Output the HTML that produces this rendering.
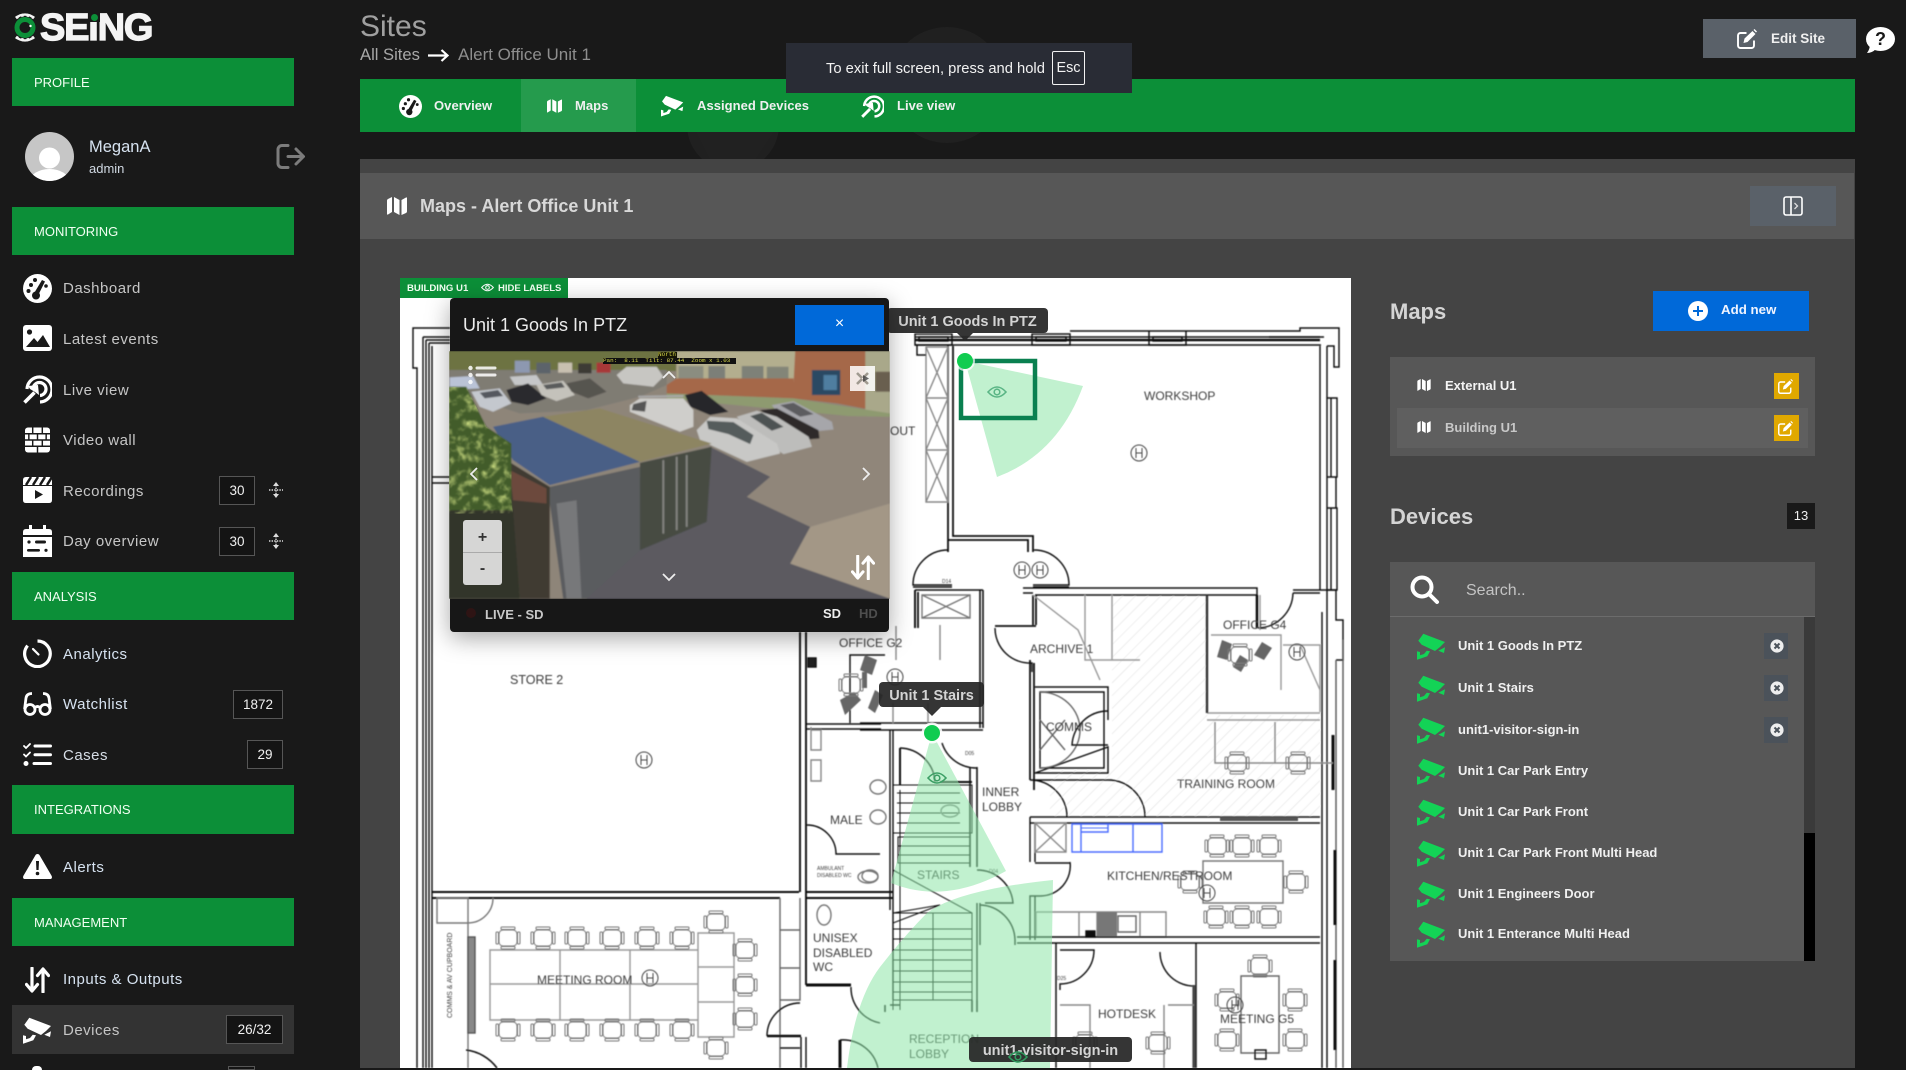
<!DOCTYPE html>
<html lang="en"><head><meta charset="utf-8"><title>Sites - Maps</title>
<style>
*{box-sizing:border-box}
html,body{margin:0;padding:0;width:1906px;height:1068px;overflow:hidden;background:#191919;font-family:"Liberation Sans",sans-serif;color:#fff}
.a,.h,.m,.b,.d,.x,.tip{position:absolute}
svg.a{overflow:visible}
.h{left:12px;width:282px;height:48px;background:#0c8f38;padding-left:22px;font-size:13px;line-height:50px;color:#f2fff2}
.m{left:63px;font-size:15px;line-height:22px;color:#c6c6c6;letter-spacing:.5px;white-space:nowrap}
.b{height:29px;border:1px solid #565656;background:#141414;text-align:center;font-size:13.5px;line-height:27px;color:#f0f0f0}
.d{left:1458px;font-size:13px;font-weight:700;line-height:20px;color:#f0f0f0;white-space:nowrap}
.x{left:1764px;width:24px;height:26px;background:#4b525a}
.tip{background:rgba(38,38,38,.93);border-radius:4px;color:#d4d4d4;font-size:14.5px;font-weight:700;text-align:center;white-space:nowrap;height:25px;line-height:28px}
.tab{position:absolute;top:79px;font-size:13px;font-weight:700;line-height:53px;color:#f0f0f0;white-space:nowrap;letter-spacing:.05px}
</style></head><body>

<svg width="0" height="0" style="position:absolute"><defs>
<symbol id="dash" viewBox="0 0 29 29"><circle cx="14.5" cy="14.5" r="14.5" fill="currentColor"/><g fill="#191919"><circle cx="8" cy="11" r="2"/><circle cx="12" cy="6" r="2"/><circle cx="5.5" cy="17" r="2"/><circle cx="23" cy="12" r="1.8"/><circle cx="13" cy="21.5" r="4"/><path d="M19 6l3 1.5-6.5 13-4-2z"/></g></symbol>
<symbol id="img" viewBox="0 0 29 26"><rect width="29" height="26" rx="3" fill="currentColor"/><g fill="#191919"><circle cx="6.5" cy="7" r="2.6"/><path d="M3 22l8-9 3.5 4 5.5-7 7 12z"/></g></symbol>
<symbol id="live" viewBox="0 0 29 29"><g fill="none" stroke="currentColor" stroke-width="3.2"><path d="M4 14A12.5 12.5 0 1 1 17 27"/><path d="M10 14A6.5 6.5 0 1 1 17 20.5"/><path d="M1.5 27.5l10-10" stroke-width="3.6"/></g><path d="M5 11l10-1 1 10-4-3-5-3z" fill="currentColor"/></symbol>
<symbol id="wall" viewBox="0 0 26 26"><rect width="26" height="26" rx="3" fill="currentColor"/><path d="M0 6.5H26M0 13H26M0 19.5H26M8 0V6.5M18 0V6.5M13 6.5V13M4 6.5V13M22 6.5V13M8 13V19.5M18 13V19.5M13 19.5V26" stroke="#191919" stroke-width="1.5"/></symbol>
<symbol id="clap" viewBox="0 0 29 26"><path d="M0 8V3q0-3 3-3h23q3 0 3 3v5z" fill="currentColor"/><path d="M8 0L3 8M15 0L10 8M22 0L17 8M29 0L24 8" stroke="#191919" stroke-width="2.5"/><path d="M0 9H29V23q0 3-3 3H3q-3 0-3-3z" fill="currentColor"/><path d="M12 13l8 4.5-8 4.5z" fill="#191919"/></symbol>
<symbol id="cal" viewBox="0 0 29 32"><path d="M6 0h3v4h11V0h3v4h3q3 0 3 3v3H0V7q0-3 3-3h3zM0 12H29V32H0z" fill="currentColor"/><g fill="#191919"><circle cx="6" cy="17" r="1.6"/><rect x="12" y="15.5" width="11" height="3" rx="1.5"/><rect x="4" y="24" width="13" height="2.6" rx="1.3"/><circle cx="23" cy="25.3" r="1.6"/></g></symbol>
<symbol id="watch" viewBox="0 0 29 29"><path d="M14.5 2A12.8 12.8 0 1 1 4.6 6.6" fill="none" stroke="currentColor" stroke-width="3.2"/><path d="M10 10l5.5 5.5" stroke="currentColor" stroke-width="2.2" stroke-linecap="round"/></symbol>
<symbol id="glass" viewBox="0 0 29 24"><g fill="none" stroke="currentColor" stroke-width="2.8"><circle cx="7" cy="17.5" r="5"/><circle cx="22" cy="17.5" r="5"/><path d="M1.6 17L3 6Q3.6 1.6 9 1.5M27.4 17L26 6Q25.4 1.6 20 1.5M12 15.5Q14.5 13.5 17 15.5"/></g></symbol>
<symbol id="cases" viewBox="0 0 29 23"><g fill="none" stroke="currentColor" stroke-linecap="round"><path d="M1 3l2 2 4-4M1 11.5l2 2 4-4" stroke-width="1.8"/><path d="M12 3H27.5M12 11.8H27.5M11 20.5H27.5" stroke-width="3"/></g><circle cx="3" cy="20.5" r="2.5" fill="currentColor"/></symbol>
<symbol id="alert" viewBox="0 0 29 25"><path d="M14.5 0q1.5 0 2.3 1.6L28.7 22q1 3-2 3H2.3q-3 0-2-3L12.2 1.6Q13 0 14.5 0z" fill="currentColor"/><path d="M13 7h3l-.4 9h-2.2z" fill="#191919"/><circle cx="14.5" cy="19.5" r="1.8" fill="#191919"/></symbol>
<symbol id="io" viewBox="0 0 25 26"><path d="M7 1V23M1.5 17.5L7 24l5.5-6.5M18 25V3M12.5 8.5L18 2l5.5 6.5" fill="none" stroke="currentColor" stroke-width="3.2" stroke-linecap="round" stroke-linejoin="round"/></symbol>
<symbol id="cam" viewBox="0 0 29 27"><path d="M6.3 .8L28 9 23 14 18 18 4.7 11.7 1.3 7.7zM28 14.3L27 20 21.3 17.7zM0 18.3L3 19V22.3L7 21 9.7 17.7 13 18.3 10.3 23.3 3 25.7 0 26.7z" fill="currentColor"/></symbol>
<symbol id="map" viewBox="0 0 20 18"><path d="M0 3.5Q0 2.5 1 2L5 0V15L1 17.5Q0 18 0 17zM7 0L12.5 3V18L7 15zM14.5 3L19 .5Q20 0 20 1V14.5Q20 15.5 19 16L14.5 18z" fill="currentColor"/></symbol>
<symbol id="edit" viewBox="0 0 20 20"><path d="M17 11.5V16.5A2.5 2.5 0 0 1 14.5 19H3.5A2.5 2.5 0 0 1 1 16.5V6.5A2.5 2.5 0 0 1 3.5 4H9.5" fill="none" stroke="currentColor" stroke-width="1.9"/><path d="M6.5 14l1-4.5L15.5 2l3 3-8 8zM16.5 1l1-1 2.5 2.5-1 1z" fill="currentColor"/></symbol>
<symbol id="xc" viewBox="0 0 14 14"><circle cx="7" cy="7" r="6.6" fill="currentColor"/><path d="M4.5 4.5l5 5M9.5 4.5l-5 5" stroke="#4b525a" stroke-width="2"/></symbol>
<symbol id="move" viewBox="0 0 14 16"><path d="M7 0l3 4H4zM7 16l-3-4h6z" fill="currentColor"/><path d="M0 8H14M7 3V13" stroke="currentColor" stroke-width="1.4" stroke-dasharray="1.4 1.2"/></symbol>
<symbol id="eye" viewBox="0 0 20 14"><path d="M1 7Q10-3 19 7 10 17 1 7z" fill="none" stroke="currentColor" stroke-width="1.6"/><circle cx="10" cy="7" r="2.8" fill="none" stroke="currentColor" stroke-width="1.6"/></symbol>
<g id="ch" fill="none" stroke="#777" stroke-width="1"><rect x="-9" y="-8" width="18" height="16" rx="4"/><rect x="-12" y="-6" width="2.5" height="12" rx="1"/><rect x="9.5" y="-6" width="2.5" height="12" rx="1"/><rect x="-7" y="-11" width="14" height="2.5" rx="1"/><rect x="-7" y="8.5" width="14" height="2.5" rx="1"/></g>
<g id="hh" fill="none" stroke="#444" stroke-width="1"><circle r="8"/><path d="M-3-5V5M3-5V5M-3 0H3"/></g>
<pattern id="hatch" width="9" height="9" patternUnits="userSpaceOnUse" patternTransform="rotate(-45)"><path d="M0 0H9" stroke="#ddd" stroke-width="1"/></pattern>
<filter id="soft" x="-2%" y="-2%" width="104%" height="104%"><feGaussianBlur stdDeviation=".4"/></filter>
<filter id="vb" x="-2%" y="-2%" width="104%" height="104%"><feGaussianBlur stdDeviation="2.2"/></filter>
<filter id="leaf"><feTurbulence type="fractalNoise" baseFrequency=".04" numOctaves="3" seed="4"/><feColorMatrix values="0 0 0 0 .6 0 0 0 0 .72 0 0 0 0 .22 2.4 0 0 0 -1.15"/><feGaussianBlur stdDeviation="2"/></filter>
<clipPath id="treeclip"><path d="M148 350H200L260 470 335 520V690L340 730H148z"/></clipPath>
</defs></svg>

<!-- faint watermark -->
<svg class="a" style="left:360px;top:0" width="1495" height="160"><circle cx="373" cy="125" r="46" fill="#202020"/><circle cx="587" cy="85" r="58" fill="#202020"/><path d="M335 130h80l-20 30h-45z" fill="#212121"/></svg>

<!-- LOGO -->
<svg class="a" style="left:12px;top:11px" width="27" height="33" viewBox="0 0 27 33"><g fill="none" stroke="#f4f4f4"><path d="M4 7A13.5 13.5 0 0 1 22 7M4 26A13.5 13.5 0 0 0 22 26" stroke-width="2.4"/><path d="M4 7A15.5 15.5 0 0 1 22 7M4 26A15.5 15.5 0 0 0 22 26" stroke-width="3" stroke-dasharray="2.6 3"/></g><circle cx="13" cy="16.5" r="8" fill="#191919" stroke="#0c8f38" stroke-width="5"/><circle cx="18.5" cy="15" r="1.2" fill="#fff"/></svg>
<div class="a" style="left:40px;top:6px;font-size:38px;line-height:44px;font-weight:700;color:#f4f4f4;letter-spacing:-1.2px;-webkit-text-stroke:1.3px #f4f4f4">SEiNG</div>
<div class="a" style="left:89px;top:11px;width:11px;height:11px;background:#191919"></div>
<div class="a" style="left:91px;top:14px;width:7px;height:7px;border-radius:50%;background:#0c8f38"></div>

<!-- SIDEBAR -->
<div class="h" style="top:58px">PROFILE</div>
<svg class="a" style="left:24.5px;top:132px" width="49" height="49" viewBox="0 0 49 49"><defs><clipPath id="av"><circle cx="24.5" cy="24.5" r="24.5"/></clipPath></defs><g clip-path="url(#av)"><rect width="49" height="49" fill="#c6c6c6"/><circle cx="24.5" cy="26" r="10.5" fill="#fff"/><ellipse cx="24.5" cy="50" rx="20" ry="13" fill="#fff"/></g></svg>
<div class="a" style="left:89px;top:137px;font-size:16.5px;line-height:20px;color:#d6e2f0">MeganA</div>
<div class="a" style="left:89px;top:161px;font-size:13px;line-height:16px;color:#d0d8e2">admin</div>
<svg class="a" style="left:276px;top:144px;color:#7c7c7c" width="30" height="25" viewBox="0 0 30 25"><path d="M12 1.5H6A4 4 0 0 0 2 5.5V19.5A4 4 0 0 0 6 23.5H12M12 12.5H27M20 5l7.5 7.5L20 20" fill="none" stroke="currentColor" stroke-width="3" stroke-linecap="round" stroke-linejoin="round"/></svg>

<div class="h" style="top:207px">MONITORING</div>
<svg class="a" style="left:23px;top:274px;color:#fff" width="29" height="29"><use href="#dash"/></svg><div class="m" style="top:278px">Dashboard</div>
<svg class="a" style="left:23px;top:325px;color:#fff" width="29" height="26"><use href="#img"/></svg><div class="m" style="top:329px">Latest events</div>
<svg class="a" style="left:23px;top:375px;color:#fff" width="29" height="29"><use href="#live"/></svg><div class="m" style="top:380px">Live view</div>
<svg class="a" style="left:25px;top:427px;color:#fff" width="25" height="26"><use href="#wall"/></svg><div class="m" style="top:430px">Video wall</div>
<svg class="a" style="left:23px;top:477px;color:#fff" width="29" height="26"><use href="#clap"/></svg><div class="m" style="top:481px">Recordings</div>
<div class="b" style="left:219px;top:476px;width:36px">30</div><svg class="a" style="left:269px;top:482px;color:#ddd" width="14" height="16"><use href="#move"/></svg>
<svg class="a" style="left:23px;top:525px;color:#fff" width="29" height="32"><use href="#cal"/></svg><div class="m" style="top:531px">Day overview</div>
<div class="b" style="left:219px;top:527px;width:36px">30</div><svg class="a" style="left:269px;top:533px;color:#ddd" width="14" height="16"><use href="#move"/></svg>

<div class="h" style="top:572px">ANALYSIS</div>
<svg class="a" style="left:23px;top:639px;color:#fff" width="29" height="29"><use href="#watch"/></svg><div class="m" style="top:644px;color:#d6e2f0">Analytics</div>
<svg class="a" style="left:23px;top:692px;color:#fff" width="29" height="24"><use href="#glass"/></svg><div class="m" style="top:694px;color:#d6e2f0">Watchlist</div>
<div class="b" style="left:233px;top:690px;width:50px">1872</div>
<svg class="a" style="left:23px;top:743px;color:#fff" width="29" height="23"><use href="#cases"/></svg><div class="m" style="top:745px;color:#d6dde6">Cases</div>
<div class="b" style="left:247px;top:740px;width:36px">29</div>

<div class="h" style="top:785px;height:49px">INTEGRATIONS</div>
<svg class="a" style="left:23px;top:854px;color:#fff" width="29" height="25"><use href="#alert"/></svg><div class="m" style="top:857px;color:#d6e2f0">Alerts</div>

<div class="h" style="top:898px">MANAGEMENT</div>
<svg class="a" style="left:25px;top:967px;color:#fff" width="25" height="26"><use href="#io"/></svg><div class="m" style="top:969px;color:#d6e2f0">Inputs &amp; Outputs</div>
<div class="a" style="left:12px;top:1005px;width:282px;height:49px;background:#333"></div>
<svg class="a" style="left:23px;top:1017px;color:#fff" width="29" height="27"><use href="#cam"/></svg><div class="m" style="top:1020px">Devices</div>
<div class="b" style="left:226px;top:1015px;width:57px">26/32</div>
<div class="a" style="left:32px;top:1066px;width:10px;height:4px;border-radius:5px 5px 0 0;background:#fff"></div>
<div class="a" style="left:228px;top:1066px;width:27px;height:4px;border:1px solid #565656;background:#141414"></div>

<!-- TITLE -->
<div class="a" style="left:360px;top:9px;font-size:30px;line-height:36px;color:#a0a0a0">Sites</div>
<div class="a" style="left:360px;top:45px;font-size:16.6px;line-height:20px;color:#a8a8a8">All Sites</div>
<svg class="a" style="left:428px;top:49px;color:#fff" width="21" height="13" viewBox="0 0 21 13"><path d="M0 6.5H19M13.5 1l6 5.5-6 5.5" fill="none" stroke="currentColor" stroke-width="2.2"/></svg>
<div class="a" style="left:458px;top:45px;font-size:17px;line-height:20px;color:#8e8e8e">Alert Office Unit 1</div>

<!-- EDIT SITE -->
<div class="a" style="left:1703px;top:19px;width:153px;height:39px;background:#5a6169"></div>
<svg class="a" style="left:1737px;top:29px;color:#fff" width="20" height="20"><use href="#edit"/></svg>
<div class="a" style="left:1771px;top:30px;font-size:13.5px;line-height:18px;font-weight:700;color:#f0f0f0">Edit Site</div>
<svg class="a" style="left:1866px;top:27px" width="29" height="26" viewBox="0 0 29 26"><ellipse cx="14.5" cy="12" rx="14.5" ry="12" fill="#fff"/><path d="M1 26q5 0 9-4l-6-5q0 5-3 9z" fill="#fff"/></svg>
<div class="a" style="left:1866px;top:27px;width:29px;text-align:center;font-size:18px;line-height:24px;font-weight:700;color:#191919">?</div>

<!-- TABS -->
<div class="a" style="left:360px;top:79px;width:1495px;height:53px;background:#0c8f38"></div>
<div class="a" style="left:521px;top:79px;width:115px;height:53px;background:#259b4d"></div>
<svg class="a" style="left:399px;top:95px;color:#fff" width="23" height="23"><use href="#dash"/></svg><div class="tab" style="left:434px">Overview</div>
<svg class="a" style="left:547px;top:99px;color:#fff" width="15" height="14"><use href="#map"/></svg><div class="tab" style="left:575px">Maps</div>
<svg class="a" style="left:661px;top:95px;color:#fff" width="23" height="22"><use href="#cam"/></svg><div class="tab" style="left:697px">Assigned Devices</div>
<svg class="a" style="left:861px;top:95px;color:#fff" width="23" height="23"><use href="#live"/></svg><div class="tab" style="left:897px">Live view</div>

<!-- PANEL -->
<div class="a" style="left:360px;top:159px;width:1495px;height:909px;background:#444"></div>
<div class="a" style="left:360px;top:173px;width:1494px;height:66px;background:#575757"></div>
<svg class="a" style="left:387px;top:197px;color:#fff" width="20" height="18"><use href="#map"/></svg>
<div class="a" style="left:420px;top:195px;font-size:18px;line-height:22px;font-weight:700;color:#d8d8d8">Maps - Alert Office Unit 1</div>
<div class="a" style="left:1750px;top:186px;width:86px;height:40px;background:#5a6169"></div>
<svg class="a" style="left:1783px;top:196px;color:#fff" width="20" height="20" viewBox="0 0 20 20"><rect x="1" y="1" width="18" height="18" rx="2" fill="none" stroke="currentColor" stroke-width="1.6"/><path d="M8 1V19" stroke="currentColor" stroke-width="1.6"/><path d="M11.5 7l3 3-3 3" fill="none" stroke="#ddd" stroke-width="1.3"/></svg>

<!-- MAP -->
<div class="a" style="left:400px;top:278px;width:951px;height:790px;background:#fff"></div>
<svg class="a" style="left:400px;top:278px;overflow:hidden" width="951" height="790" viewBox="400 278 951 790">
<g filter="url(#soft)">
<rect x="1112" y="595" width="95" height="222" fill="url(#hatch)"/><rect x="1207" y="715" width="113" height="102" fill="url(#hatch)"/><rect x="1050" y="770" width="62" height="47" fill="url(#hatch)"/>
<g fill="none" stroke="#111" stroke-width="1.4">
<!-- outer left -->
<path d="M450 328H413V368H417V1068M423 337V1068M426 340V1068M429 343V1068M432 346V1068M423 337H450M426 340H450M429 343H450M432 477H450M432 483H450"/>
<!-- top wall -->
<path d="M915 337H1320M915 345H1321"/><path d="M915 340H1320" stroke-width="2.6"/>
<path d="M915 334H952V345H915zM1032 334H1070V345H1032zM1149 331H1186V345H1149zM1070 331H1149M1186 331H1300V328H1339V367H1334V346H1327"/>
<path d="M919 337H948V341H919zM1036 337H1066V341H1036zM1153 337H1182V341H1153zM1269 337H1324"/>
<!-- right wall -->
<path d="M1320 346V590M1327 346V398M1327 590V1068M1320 590H1336V620H1343V660H1336M1322 612V1068"/>
<path d="M1327 398H1337V477H1327zM1327 477H1336V508H1327zM1327 508H1337V590H1327zM1331 398V477M1331 508V590" />
<path d="M1336 660V1068M1343 640V1068" stroke="#555"/>
<path d="M1333 735V790M1335 850V925M1335 960V1050" stroke-width="3"/>
<!-- workshop lower -->
<path d="M948 345V540M953 346V536H1033V552M948 540H1028V552M948 540V552" stroke-width="1.8"/>
<path d="M948 550A35 35 0 0 0 913 585H952M1034 550A35 35 0 0 1 1069 585H1033M913 587H952M1033 587H1069"/>
<path d="M1023 588H1257V595H1035M1023 593H1033M1293 590H1320M1293 593H1320"/>
<path d="M1257 595V628" stroke-width="2.6"/><path d="M1293 593A36 36 0 0 1 1258 628"/>
<!-- left of corridor -->
<path d="M915 590H952M915 590V628M983 590V728M980 590V728M948 590H983" stroke-width="1.6"/>
<path d="M915 628V590M918 628V592" stroke-width="1.8"/>
<path d="M1033 595V625M1036 595V625M995 626H1036" stroke-width="1.8"/>
<path d="M995 628A35 35 0 0 0 1032 663V672"/>
<path d="M1034 663V790M1030 660V780" stroke-width="1.8"/>
<!-- store / lower left -->
<path d="M800 632V892M799 892H432M806 632V985M806 898H893M806 892H893M432 898H780" stroke-width="1.9"/>
<path d="M780 898V1000H800V898M780 930H800M780 968H800M780 1000V1068" stroke="#666"/>
<rect x="808" y="658" width="8" height="9" fill="#222"/>
<path d="M806 724H881M806 729H881M850 723V655H885M890 730V910M893 730V1000"/>
<path d="M807 825A29 29 0 0 1 836 854H880"/>
<path d="M437 898H468V923H437zM468 898V937M468 923A25 25 0 0 0 493 898" stroke="#777"/>
<path d="M468 937V1068" stroke="#777"/><rect x="468" y="937" width="7" height="96" fill="#888" stroke="#555"/>
<path d="M466 1050A45 45 0 0 1 497 1068" stroke-width="1.6"/>
<path d="M806 985H851" stroke-width="3"/><path d="M851 987A36 36 0 0 0 880 1023"/>
<path d="M800 1003A33 33 0 0 0 767 1036"/><path d="M767 1036H801" stroke-width="2.4"/><path d="M801 1037V1068M806 1037V1068M780 1048H800"/>
<path d="M840 1040V1068" stroke-width="3"/><path d="M840 1040A36 36 0 0 1 878 1068"/>
<!-- stairs -->
<path d="M893 785H972V833H893zM897 793H960M897 803H960M897 813H960M897 823H960M898 837H970V863H898zM898 846H970M898 855H970M893 785V1010M900 790V1010" stroke-width="1"/>
<path d="M893 913H972V1000H893zM893 929H972M893 939H972M893 950H972M893 960H972M893 971H972M893 982H972M893 992H972M933 913V1000M893 870L972 913M893 913L940 905 893 923" stroke-width="1"/>
<path d="M970 767V867M977 767V867M885 1005V1012M972 1000V1012M977 1000V1012M890 1005H900" stroke-width="1.6"/>
<path d="M860 723H983M860 730H983" stroke-width="1.6"/>
<path d="M893 703V723M928 703V723" stroke="#888"/>
<path d="M900 748V785M940 782H972" stroke-width="2"/><path d="M900 748A36 36 0 0 1 935 782"/>
<path d="M942 743A36 36 0 0 0 977 768"/>
<path d="M977 870A36 36 0 0 1 1013 903H985M977 903V1000M980 903V945" stroke-width="1.4"/>
<path d="M980 905A36 36 0 0 1 1015 940V945"/>
<!-- comms -->
<path d="M1035 687H1108V720M1108 747V773H1035zM1040 692H1104V768H1040z" stroke-width="1.4"/>
<path d="M1040 692A40 38 0 0 1 1040 768M1040 720L1065 750M1065 720L1040 750" stroke="#666"/>
<path d="M1108 711A36 36 0 0 0 1072 745H1108"/>
<path d="M1030 780H1112M1108 780A37 37 0 0 1 1145 817M1030 780A37 37 0 0 1 1067 817"/>
<path d="M1030 817H1320M1030 823H1320M1030 817V862M1035 823V862M1035 863H1070" stroke-width="1.4"/>
<path d="M1220 819H1298" stroke-width="4" stroke="#555"/>
<path d="M1035 823H1066V852H1035zM1035 823L1066 852M1066 823L1035 852" stroke="#888"/>
<path d="M1070 862A30 30 0 0 1 1040 896H1030V940M1035 896V940" stroke-width="1.4"/>
<!-- kitchen -->
<path d="M1072 824H1162V852H1072zM1081 824V852M1133 824V852M1081 832H1108V824" stroke="#4a6cff" stroke-width="1.4"/>
<path d="M1081 828H1108" stroke="#4a6cff" stroke-width="1"/>
<path d="M1203 861H1283V903H1203z" stroke="#777"/>
<path d="M1036 912H1166V937H1036zM1079 912V937M1097 912V937M1140 912V937" stroke="#888"/>
<rect x="1097" y="912" width="20" height="24" fill="#777" stroke="none"/>
<path d="M1118 916H1136V932H1118z" stroke="#666"/><rect x="1086" y="931" width="9" height="6" fill="#111"/>
<path d="M1017 937H1320M1017 943H1320M1056 943V1068M1059 943H1070M1196 943V1068" stroke-width="1.5"/>
<path d="M1060 950H1094A34 34 0 0 1 1060 984V990M1160 952A34 34 0 0 0 1196 986"/>
<path d="M1194 985V1068" stroke-width="3.2" stroke="#444"/>
<path d="M1060 1005H1090V1068M1168 1005H1194M1164 1005V1068" stroke="#888"/>
<path d="M1241 976H1279V1053H1241z" stroke="#666"/><rect x="1255" y="1050" width="11" height="9" fill="none"/>
<!-- goods rack -->
<path d="M926 347H948V502H926zM926 398H948M926 450H948M926 347L948 398M948 347L926 398M926 398L948 450M948 398L926 450M926 450L948 502M948 450L926 502" stroke="#888"/>
<path d="M917 345V355H926" />
<!-- offices -->
<path d="M1033 595L1078 630 1100 680M1085 595V660H1112V595M1112 595V660M1140 660H1112M1207 595V713M1207 713H1320M1207 720H1320M1260 595V630M1211 635H1281V690" stroke="#999"/>
<path d="M922 595H970V618H922zM922 595L970 618M970 595L922 618" stroke="#777"/>
<path d="M1207 595V713" stroke-width="2.4" stroke="#333"/>
<path d="M1283 645H1320V712M1300 645L1320 690" stroke="#999"/>
<path d="M1215 722V763H1275V722M1275 722V763H1333" stroke="#888"/>
<path d="M896 626V660M940 625V660" stroke="#888"/>
<path d="M811 727V750H821V730H811M811 760H821V781H811z" stroke="#888"/>
<ellipse cx="878" cy="787" rx="8" ry="7" stroke="#777"/><ellipse cx="878" cy="817" rx="8" ry="7" stroke="#777"/>
<ellipse cx="868" cy="877" rx="10" ry="6" stroke="#777"/><ellipse cx="824" cy="915" rx="7" ry="10" stroke="#777"/>
<ellipse cx="950" cy="811" rx="9" ry="6" stroke="#777"/><ellipse cx="870" cy="876" rx="8" ry="6" stroke="#777"/>
<!-- meeting table -->
<path d="M490 950H698V1020H490zM560 950V1020M630 950V1020M490 984H698M698 933H734V1037H698zM698 967H734M698 1002H734" stroke="#999"/>
</g>
<g fill="#666"><path d="M1222 640l10 4-5 16-10-3zM1240 655l8 5-7 12-8-5zM1262 642l10 6-8 12-10-5z"/><path d="M840 700l14-8 7 8-16 15zM865 655l12 5-5 15-12-5zM875 690l8 5-8 18-7-5z"/><path d="M862 672l5 0 0 16-5 0z"/></g>
<!-- chairs -->
<use href="#ch" x="508" y="938"/><use href="#ch" x="543" y="938"/><use href="#ch" x="577" y="938"/><use href="#ch" x="612" y="938"/><use href="#ch" x="647" y="938"/><use href="#ch" x="682" y="938"/>
<use href="#ch" x="508" y="1030"/><use href="#ch" x="543" y="1030"/><use href="#ch" x="577" y="1030"/><use href="#ch" x="612" y="1030"/><use href="#ch" x="647" y="1030"/><use href="#ch" x="682" y="1030"/>
<use href="#ch" x="745" y="950"/><use href="#ch" x="745" y="985"/><use href="#ch" x="745" y="1019"/><use href="#ch" x="716" y="922"/><use href="#ch" x="716" y="1048"/>
<use href="#ch" x="1217" y="846"/><use href="#ch" x="1242" y="846"/><use href="#ch" x="1269" y="846"/><use href="#ch" x="1296" y="882"/><use href="#ch" x="1190" y="882"/><use href="#ch" x="1216" y="917"/><use href="#ch" x="1242" y="917"/><use href="#ch" x="1269" y="917"/>
<use href="#ch" x="1237" y="763"/><use href="#ch" x="1298" y="763"/>
<use href="#ch" x="1260" y="966"/><use href="#ch" x="1227" y="1000"/><use href="#ch" x="1295" y="1000"/><use href="#ch" x="1227" y="1040"/><use href="#ch" x="1295" y="1040"/>
<use href="#ch" x="1085" y="1043"/><use href="#ch" x="1158" y="1043"/>
<use href="#ch" x="1240" y="655"/><use href="#ch" x="851" y="685"/>
<!-- H -->
<use href="#hh" x="1139" y="453"/><use href="#hh" x="644" y="760"/><use href="#hh" x="650" y="978"/><use href="#hh" x="1207" y="893"/><use href="#hh" x="1297" y="652"/><use href="#hh" x="895" y="677"/><use href="#hh" x="1235" y="1005"/>
<use href="#hh" x="1022" y="570"/><use href="#hh" x="1040" y="570"/>
<!-- labels -->
<g font-family="Liberation Sans,sans-serif" font-size="12" fill="#3c3c3c">
<text x="1144" y="400">WORKSHOP</text><text x="510" y="684" font-size="12.5">STORE 2</text><text x="537" y="984">MEETING ROOM</text>
<text x="839" y="647">OFFICE G2</text><text x="890" y="435">OUT</text><text x="1030" y="653">ARCHIVE 1</text><text x="1223" y="629">OFFICE G4</text><text x="1046" y="731">COMMS</text>
<text x="1177" y="788">TRAINING ROOM</text><text x="982" y="796">INNER</text><text x="982" y="811">LOBBY</text><text x="917" y="879">STAIRS</text><text x="830" y="824">MALE</text>
<text x="1107" y="880">KITCHEN/RESTROOM</text><text x="813" y="942">UNISEX</text><text x="813" y="957">DISABLED</text><text x="813" y="971">WC</text>
<text x="909" y="1043">RECEPTION</text><text x="909" y="1058">LOBBY</text><text x="1098" y="1018">HOTDESK</text><text x="1220" y="1023">MEETING G5</text>
<text x="0" y="0" font-size="7" transform="translate(452,1018) rotate(-90)">COMMS &amp; AV CUPBOARD</text>
<text x="817" y="870" font-size="5">AMBULANT</text><text x="817" y="877" font-size="5">DISABLED WC</text>
<text x="942" y="583" font-size="5">D14</text><text x="965" y="755" font-size="5">D05</text><text x="1057" y="980" font-size="5">D25</text><text x="989" y="873" font-size="5">D04</text>
</g>
</g>
<!-- cones -->
<g fill="#8ee5a8" fill-opacity=".55">
<path d="M965 361L1083 386Q1058 454 997 477z"/>
<path d="M932 733L1006 871Q945 905 891 883z"/>
</g>
<path d="M847 1068Q855 1000 880 967 905 935 927 913 957 890 1053 880L1050 1068z" fill="#8ee5a8" fill-opacity=".55"/>
<rect x="961" y="361" width="74" height="57" fill="none" stroke="#0a8050" stroke-width="4.5"/>
<circle cx="965" cy="361" r="10" fill="#fff" fill-opacity=".7"/><circle cx="965" cy="361" r="8" fill="#10cc50"/>
<circle cx="932" cy="733" r="10.5" fill="#fff" fill-opacity=".85"/><circle cx="932" cy="733" r="8" fill="#10cc50"/>
<svg x="987" y="385" width="20" height="14" style="color:#5ab585"><use href="#eye"/></svg>
<svg x="927" y="771" width="20" height="14" style="color:#3c9f65"><use href="#eye"/></svg>
</svg>

<!-- tooltips -->
<div class="tip" style="left:887px;top:308px;width:161px">Unit 1 Goods In PTZ</div>
<div class="a" style="left:957px;top:333px;width:0;height:0;border:8px solid transparent;border-top-color:rgba(38,38,38,.93);border-bottom:0"></div>
<div class="tip" style="left:879px;top:682px;width:105px">Unit 1 Stairs</div>
<div class="a" style="left:923px;top:707px;width:0;height:0;border:9px solid transparent;border-top-color:rgba(38,38,38,.93);border-bottom:0"></div>
<div class="tip" style="left:969px;top:1037px;width:163px">unit1-visitor-sign-in</div>
<svg class="a" style="left:1008px;top:1050px;color:#2f9a5e" width="20" height="14"><use href="#eye"/></svg>

<!-- map tag -->
<div class="a" style="left:400px;top:278px;width:168px;height:20px;background:#0c8f38"></div>
<div class="a" style="left:407px;top:282px;font-size:9.6px;line-height:14px;font-weight:700;color:#f2fff2;white-space:nowrap">BUILDING U1</div>
<svg class="a" style="left:481px;top:282px;color:#fff" width="13" height="11"><use href="#eye"/></svg>
<div class="a" style="left:498px;top:282px;font-size:9.5px;line-height:14px;font-weight:700;color:#f2fff2;white-space:nowrap">HIDE LABELS</div>

<!-- video popup -->
<div class="a" style="left:450px;top:298px;width:439px;height:334px;background:#171717;border-radius:4px;box-shadow:0 6px 24px rgba(0,0,0,.35)"></div>
<div class="a" style="left:463px;top:314px;font-size:18px;line-height:22px;color:#ececec;white-space:nowrap">Unit 1 Goods In PTZ</div>
<div class="a" style="left:795px;top:305px;width:89px;height:40px;background:#0069d9;text-align:center;font-size:16px;line-height:38px;color:#fff">×</div>
<svg class="a" style="left:449px;top:351px;overflow:hidden" width="441" height="248" viewBox="148 243 1321 743" preserveAspectRatio="none">
<g filter="url(#vb)">
<rect x="148" y="243" width="1321" height="743" fill="#8e8579"/>
<rect x="148" y="243" width="680" height="60" fill="#6d7343"/>
<path d="M148 300H800V345L720 380 640 400 560 420 360 430 148 360z" fill="#7f7b73"/>
<rect x="830" y="243" width="370" height="100" fill="#b3ae8e"/>
<rect x="835" y="288" width="75" height="42" fill="#8b8d80"/><rect x="925" y="288" width="50" height="42" fill="#7c7f78"/><rect x="1025" y="288" width="65" height="40" fill="#7e8178"/><rect x="1100" y="290" width="65" height="38" fill="#838578"/>
<path d="M800 345L830 325H1180V385L1310 400 1469 430V243H1185L1180 340 1180 385 800 370z" fill="#a5674a"/>
<rect x="1395" y="243" width="74" height="190" fill="#a9a88a"/><rect x="1425" y="305" width="44" height="60" fill="#695f50"/>
<rect x="1235" y="300" width="85" height="75" fill="#2b4a64"/><rect x="1270" y="315" width="40" height="45" fill="#4f7ea0"/>
<path d="M800 370L1180 385 1469 430V450L800 385z" fill="#8e9a70"/>
<!-- ground -->
<path d="M880 430L1469 440V700L1230 770 1040 680 1110 620 930 520z" fill="#90867a"/>
<path d="M1230 770L1469 700V986H1450L1170 880z" fill="#a39786"/>
<!-- shadow -->
<path d="M930 530L1110 620 1040 680 1230 770 1170 880 1469 985V986H560L720 620z" fill="#5b5a61"/>
<!-- small top cars -->
<rect x="345" y="272" width="45" height="36" fill="#8d98b0"/><rect x="410" y="278" width="42" height="32" fill="#5b646a"/><rect x="475" y="278" width="42" height="30" fill="#c8c0b0"/><rect x="535" y="280" width="40" height="30" fill="#3c3a36"/><rect x="590" y="278" width="42" height="30" fill="#a83838"/>
<path d="M650 315L680 290H770L790 320 760 350 670 340z" fill="#c7c6c2"/>
<!-- left row cars -->
<path d="M150 322L220 318 240 355 150 360z" fill="#bac3d6"/>
<path d="M330 320L410 315 430 345 345 345z" fill="#c5c6c8"/>
<path d="M215 365L300 355 335 400 280 425 240 410z" fill="#c4c8ce"/><path d="M240 368L295 360 310 378 255 385z" fill="#54595e"/>
<path d="M320 360L385 340 440 385 385 405 335 395z" fill="#2c2c2e"/>
<path d="M410 345L490 332 525 375 470 393 425 375z" fill="#c4c2bb"/><path d="M430 345L485 337 495 352 440 358z" fill="#5a5c5c"/>
<path d="M500 340L570 325 620 365 565 385 515 365z" fill="#56544f"/>
<!-- right cars -->
<path d="M855 375L905 362 985 425 930 435 870 410z" fill="#26262a"/>
<path d="M1115 405L1180 393 1295 455 1300 478 1235 485 1130 425z" fill="#a6a6aa"/><path d="M1140 405L1180 398 1240 432 1200 440z" fill="#5b5b5e"/>
<path d="M1080 420L1130 415 1255 480 1258 505 1200 510z" fill="#2e2c2c"/>
<path d="M1010 440L1070 422 1130 440 1225 500 1235 530 1150 552 1040 480z" fill="#bdbdbb"/><path d="M1050 438L1085 428 1150 470 1115 482z" fill="#4d5252"/>
<path d="M890 480L930 440 1010 445 1130 520 1140 550 1040 575 900 510z" fill="#c8c8c6"/><path d="M920 452L1000 456 1060 495 1050 522 985 492 925 477z" fill="#555c5c"/>
<path d="M690 405L720 385H850L880 420V470L840 485 690 425z" fill="#cfcecb"/><path d="M700 402L740 392 735 425 695 420z" fill="#555"/><path d="M715 380L850 378" stroke="#aaa" stroke-width="6"/>
<!-- container -->
<path d="M280 470L430 440 720 575 450 645 340 570z" fill="#4a5e86"/>
<path d="M430 440L600 415 935 520 720 575z" fill="#8d8562"/>
<path d="M720 578L935 530 920 755 720 840z" fill="#474b43"/>
<path d="M450 650L720 590V840L560 985H490L450 700z" fill="#5a5c5e"/>
<path d="M320 570L450 650V985H360z" fill="#3f3a32"/>
<path d="M330 600L440 655V700L340 690z" fill="#6c4a3c"/>
<path d="M470 700L530 690 545 985H500z" fill="#77787a"/>
<path d="M790 570V790M830 560V780M860 555V770" stroke="#8a8a86" stroke-width="5"/>
<!-- tree -->
<path d="M148 350H200L260 470 335 520V690L360 985H148z" fill="#425c2a"/>
<path d="M148 720H340L360 985H148z" fill="#33342a"/>
</g>
<rect x="148" y="340" width="200" height="390" filter="url(#leaf)" clip-path="url(#treeclip)"/>
</svg>
<!-- video overlays -->
<div class="a" style="left:658px;top:352px;width:19px;height:6px;background:#151505;color:#d8d84a;font:6px/6px 'Liberation Mono',monospace;white-space:nowrap;overflow:hidden">North</div>
<div class="a" style="left:603px;top:358px;width:133px;height:6px;background:#111;color:#d8d84a;font:5.9px/6px 'Liberation Mono',monospace;white-space:pre;overflow:hidden">Pan:  8.11  Tilt: 87.44  Zoom x 1.03</div>
<svg class="a" style="left:468px;top:366px;color:#fff;opacity:.85" width="28" height="17" viewBox="0 0 28 17"><path d="M9 2H27M9 9H27" stroke="currentColor" stroke-width="3" stroke-linecap="round"/><circle cx="2.5" cy="2" r="2.2" fill="currentColor"/><circle cx="2.5" cy="9" r="2.2" fill="currentColor"/><circle cx="2.5" cy="16" r="2.2" fill="currentColor"/></svg>
<svg class="a" style="left:850px;top:366px" width="25" height="25" viewBox="0 0 25 25"><rect width="25" height="25" fill="#fff" fill-opacity=".85"/><path d="M7 7l5 5M18 7l-5 5M7 18l5-5M18 18l-5-5" stroke="#a09a90" stroke-width="2.6"/><path d="M13 9l6 3.5-6 3.5z" fill="#444" fill-opacity=".8"/></svg>
<svg class="a" style="left:448px;top:351px;color:#eee" width="442" height="248" viewBox="448 351 442 248"><g fill="none" stroke="currentColor" stroke-width="1.8"><path d="M663 378l6-6 6 6M477 468l-6 6 6 6M863 468l6 6-6 6M663 574l6 6 6-6"/></g></svg>
<div class="a" style="left:463px;top:520px;width:39px;height:65px;background:rgba(232,232,232,.9);border-radius:3px"></div>
<div class="a" style="left:463px;top:552px;width:39px;height:1px;background:#aaa"></div>
<div class="a" style="left:463px;top:527px;width:39px;text-align:center;font-size:16px;line-height:22px;font-weight:700;color:#333">+</div>
<div class="a" style="left:463px;top:558px;width:39px;text-align:center;font-size:16px;line-height:22px;font-weight:700;color:#333">-</div>
<svg class="a" style="left:851px;top:555px;color:#fff" width="24" height="25"><use href="#io"/></svg>
<div class="a" style="left:466px;top:608px;width:10px;height:10px;border-radius:50%;background:#2e1414"></div>
<div class="a" style="left:485px;top:607px;font-size:13px;line-height:16px;font-weight:700;color:#c8c8c8;white-space:nowrap">LIVE - SD</div>
<div class="a" style="left:823px;top:606px;font-size:13px;line-height:16px;font-weight:700;color:#eee">SD</div>
<div class="a" style="left:859px;top:606px;font-size:13px;line-height:16px;font-weight:700;color:#4e4e4e">HD</div>

<!-- RIGHT COLUMN -->
<div class="a" style="left:1390px;top:299px;font-size:22px;line-height:26px;font-weight:700;color:#d4d4d4">Maps</div>
<div class="a" style="left:1653px;top:291px;width:156px;height:40px;background:#0069d9"></div>
<svg class="a" style="left:1688px;top:301px" width="20" height="20" viewBox="0 0 20 20"><circle cx="10" cy="10" r="10" fill="#fff"/><path d="M10 5V15M5 10H15" stroke="#0069d9" stroke-width="2"/></svg>
<div class="a" style="left:1721px;top:301px;font-size:13.3px;line-height:18px;font-weight:700;color:#f0f4ff;white-space:nowrap">Add new</div>

<div class="a" style="left:1390px;top:357px;width:425px;height:99px;background:#575757"></div>
<div class="a" style="left:1397px;top:408px;width:411px;height:40px;background:#5f5f5f"></div>
<svg class="a" style="left:1417px;top:379px;color:#fff" width="14" height="12"><use href="#map"/></svg>
<div class="a" style="left:1445px;top:377px;font-size:13px;line-height:18px;font-weight:700;color:#f4f4f4">External U1</div>
<svg class="a" style="left:1417px;top:421px;color:#fff" width="14" height="12"><use href="#map"/></svg>
<div class="a" style="left:1445px;top:419px;font-size:13px;line-height:18px;font-weight:700;color:#c8c8c8">Building U1</div>
<div class="a" style="left:1774px;top:373px;width:25px;height:26px;background:#e0a800"></div>
<svg class="a" style="left:1778px;top:379px;color:#fff" width="15" height="15"><use href="#edit"/></svg>
<div class="a" style="left:1774px;top:415px;width:25px;height:26px;background:#e0a800"></div>
<svg class="a" style="left:1778px;top:421px;color:#fff" width="15" height="15"><use href="#edit"/></svg>

<div class="a" style="left:1390px;top:504px;font-size:22px;line-height:26px;font-weight:700;color:#d4d4d4">Devices</div>
<div class="a" style="left:1787px;top:503px;width:28px;height:26px;background:#191919;text-align:center;font-size:13px;line-height:26px;color:#f0f0f0">13</div>

<div class="a" style="left:1390px;top:562px;width:425px;height:55px;background:#575757;border-bottom:1px solid #6c6c6c"></div>
<svg class="a" style="left:1410px;top:575px" width="29" height="29" viewBox="0 0 29 29"><circle cx="12" cy="12" r="9.5" fill="none" stroke="#fff" stroke-width="4"/><path d="M19 19l8 8" stroke="#fff" stroke-width="4" stroke-linecap="round"/></svg>
<div class="a" style="left:1466px;top:581px;font-size:16px;line-height:20px;color:#c4c4c4">Search..</div>

<div class="a" style="left:1390px;top:617px;width:414px;height:344px;background:#575757"></div>
<div class="a" style="left:1804px;top:617px;width:11px;height:216px;background:#3a3a3a"></div>
<div class="a" style="left:1804px;top:833px;width:11px;height:128px;background:#000"></div>

<svg class="a" style="left:1417px;top:633px;color:#13d356" width="29" height="27"><use href="#cam"/></svg><div class="d" style="top:636px">Unit 1 Goods In PTZ</div>
<svg class="a" style="left:1417px;top:675px;color:#13d356" width="29" height="27"><use href="#cam"/></svg><div class="d" style="top:678px">Unit 1 Stairs</div>
<svg class="a" style="left:1417px;top:717px;color:#13d356" width="29" height="27"><use href="#cam"/></svg><div class="d" style="top:720px">unit1-visitor-sign-in</div>
<svg class="a" style="left:1417px;top:758px;color:#13d356" width="29" height="27"><use href="#cam"/></svg><div class="d" style="top:761px">Unit 1 Car Park Entry</div>
<svg class="a" style="left:1417px;top:799px;color:#13d356" width="29" height="27"><use href="#cam"/></svg><div class="d" style="top:802px">Unit 1 Car Park Front</div>
<svg class="a" style="left:1417px;top:840px;color:#13d356" width="29" height="27"><use href="#cam"/></svg><div class="d" style="top:843px">Unit 1 Car Park Front Multi Head</div>
<svg class="a" style="left:1417px;top:881px;color:#13d356" width="29" height="27"><use href="#cam"/></svg><div class="d" style="top:884px">Unit 1 Engineers Door</div>
<svg class="a" style="left:1417px;top:921px;color:#13d356" width="29" height="27"><use href="#cam"/></svg><div class="d" style="top:924px">Unit 1 Enterance Multi Head</div>

<div class="x" style="top:633px"></div><svg class="a" style="left:1770px;top:639px;color:#eee" width="14" height="14"><use href="#xc"/></svg>
<div class="x" style="top:675px"></div><svg class="a" style="left:1770px;top:681px;color:#eee" width="14" height="14"><use href="#xc"/></svg>
<div class="x" style="top:717px"></div><svg class="a" style="left:1770px;top:723px;color:#eee" width="14" height="14"><use href="#xc"/></svg>

<!-- fullscreen notice -->
<div class="a" style="left:786px;top:43px;width:346px;height:50px;background:#292c35"></div>
<div class="a" style="left:826px;top:60px;font-size:14.75px;line-height:18px;color:#f2f2f2;white-space:nowrap">To exit full screen, press and hold</div>
<div class="a" style="left:1052px;top:51px;width:33px;height:34px;border:1px solid #f2f2f2;border-radius:2px;text-align:center;font-size:14.4px;line-height:32px;color:#f2f2f2">Esc</div>
</body></html>
